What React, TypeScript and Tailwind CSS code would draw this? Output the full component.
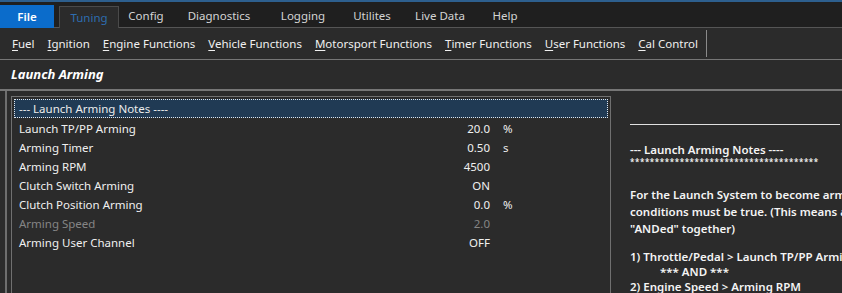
import React from 'react';

const tabs = [
    { name: 'Config', w: 'w-[54px]' },
    { name: 'Diagnostics', w: 'w-[92px]' },
    { name: 'Logging', w: 'w-[76px]' },
    { name: 'Utilites', w: 'w-[62px]' },
    { name: 'Live Data', w: 'w-[74px]' },
    { name: 'Help', w: 'w-[56px]' },
];

const menus = ['Fuel', 'Ignition', 'Engine Functions', 'Vehicle Functions', 'Motorsport Functions', 'Timer Functions', 'User Functions', 'Cal Control'];

const rows = [
    { label: 'Launch TP/PP Arming', value: '20.0', unit: '%' },
    { label: 'Arming Timer', value: '0.50', unit: 's' },
    { label: 'Arming RPM', value: '4500', unit: '' },
    { label: 'Clutch Switch Arming', value: 'ON', unit: '' },
    { label: 'Clutch Position Arming', value: '0.0', unit: '%' },
    { label: 'Arming Speed', value: '2.0', unit: '', disabled: true },
    { label: 'Arming User Channel', value: 'OFF', unit: '' },
];

const App = () => {
    return (
        <div className="w-[842px] h-[293px] overflow-hidden bg-[#2b2b2b] text-[11.5px] text-[#ececec] font-['Noto_Sans',sans-serif]">
            {/* top strip */}
            <div className="h-[2px] bg-[#2d5f8e]" />

            {/* tab bar */}
            <div className="h-[26px] bg-[#1f1f1f] flex items-end border-b border-[#555555]">
                <div className="w-[54px] h-[23px] bg-[#0b6ccb] flex items-center justify-center font-semibold text-white -mb-px">File</div>
                <div className="ml-[5px] w-[60px] h-[22px] bg-[#2b2b2b] border border-b-0 border-[#4a4a4a] flex items-center justify-center text-[#2e6db0] -mb-px">Tuning</div>
                {tabs.map((t) => (
                    <div key={t.name} className={`${t.w} h-[23px] flex items-center justify-center text-[#d4d4d4]`}>{t.name}</div>
                ))}
            </div>

            {/* menu bar */}
            <div className="h-[32px] flex items-center pl-[12px] gap-[13px] border-b border-[#767676]">
                {menus.map((m) => (
                    <span key={m} className="text-[#f0f0f0]">
                        <span className="underline underline-offset-2">{m[0]}</span>{m.slice(1)}
                    </span>
                ))}
                <div className="w-px h-[27px] bg-[#8a8a8a] ml-[-5px]" />
            </div>

            {/* heading */}
            <div className="h-[31px] pl-[11px] pt-[5px] font-bold italic text-[13px] text-white border-b-2 border-[#767676]">Launch Arming</div>

            <div className="flex">
                {/* parameter panel */}
                <div className="ml-[5px] w-[606px] border-l-2 border-[#6e6e6e] pl-[4px] pt-[5px] h-[220px]">
                    <div className="w-[600px] h-[215px] border border-b-0 border-[#707070] pt-[2px] px-[2px]">
                        <div className="h-[19px] bg-[#203a54] border border-dotted border-[#dfe6ee] flex items-center pl-[4px]">--- Launch Arming Notes ----</div>
                        {rows.map((r) => (
                            <div key={r.label} className={`h-[19px] flex items-center pt-[2px] pl-[5px] ${r.disabled ? 'text-[#858585]' : 'text-[#f0f0f0]'}`}>
                                <span className="flex-1">{r.label}</span>
                                <span className="w-[60px] text-right">{r.value}</span>
                                <span className="w-[118px] pl-[13px]">{r.unit}</span>
                            </div>
                        ))}
                    </div>
                </div>

                {/* notes */}
                <div className="flex-1 pl-[19px] pt-[33px] font-semibold text-[#f4f4f4] whitespace-nowrap overflow-hidden">
                    <div className="h-px bg-[#e0e0e0] w-[210px]" />
                    <div className="mt-[16px] leading-[17px]">--- Launch Arming Notes ----</div>
                    <div className="text-[8px] leading-[8px] tracking-[0.6px]">**************************************</div>
                    <div className="mt-[20px] leading-[17px]">For the Launch System to become armed, all of the following</div>
                    <div className="leading-[17px]">conditions must be true. (This means all conditions are</div>
                    <div className="leading-[17px]">"ANDed" together)</div>
                    <div className="mt-[12px] leading-[15px]">1) Throttle/Pedal &gt; Launch TP/PP Arming</div>
                    <div className="leading-[15px] pl-[30px]">*** AND ***</div>
                    <div className="leading-[15px]">2) Engine Speed &gt; Arming RPM</div>
                </div>
            </div>
        </div>
    );
};

export default App;
